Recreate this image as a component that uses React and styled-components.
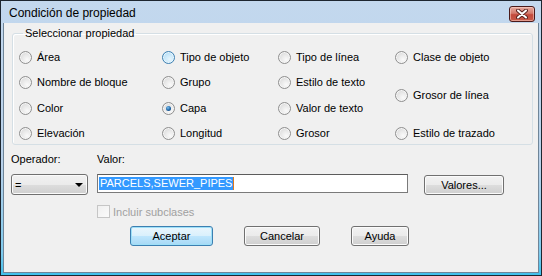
import React from 'react';
import styled, { createGlobalStyle, css } from 'styled-components';

const GlobalStyle = createGlobalStyle`
  html, body {
    margin: 0;
    padding: 0;
    background: #f0f0f0;
  }
  * { box-sizing: border-box; }
`;

const Window = styled.div`
  width: 542px;
  height: 276px;
  border: 1px solid #1d2630;
  padding: 0 2px 2px 2px;
  background: linear-gradient(#c3d8ee 0%, #b8d1ea 60%, #7fcbee 92%, #3fc0ec 100%);
  display: flex;
  flex-direction: column;
  font-family: "Liberation Sans", Arial, sans-serif;
  font-size: 11px;
  color: #000;
`;

const TitleBar = styled.div`
  height: 22px;
  display: flex;
  align-items: center;
  justify-content: space-between;
  padding: 0 4px 0 6px;
`;

const TitleText = styled.span`
  font-size: 12px;
  color: #000;
  margin-top: 1px;
`;

const CloseButton = styled.button`
  width: 26px;
  height: 16px;
  margin-top: 4px;
  padding: 0;
  border: 1px solid #4a1a1a;
  border-radius: 3px;
  background: linear-gradient(#e6aa9f 0%, #d47a6c 45%, #c34a3c 55%, #c95a48 100%);
  box-shadow: inset 0 0 0 1px rgba(255, 220, 210, 0.5);
  display: flex;
  align-items: center;
  justify-content: center;
`;

const Client = styled.div`
  flex: 1;
  background: #f0f0f0;
  border: 1px solid #6f8598;
  border-top: none;
  padding: 4px 5px 0 7px;
  display: flex;
  flex-direction: column;
`;

const GroupBox = styled.fieldset`
  margin: 0 0 0 1px;
  padding: 12px 0 4px 6px;
  border: 1px solid #d5dfe5;
  border-radius: 3px;
  box-shadow: inset 1px 1px 0 #fff;
  min-width: 0;
`;

const Legend = styled.legend`
  padding: 0 2px;
  margin-left: 4px;
  line-height: 12px;
`;

const Columns = styled.div`
  display: flex;
  height: 89px;
`;

const Column = styled.div`
  width: ${p => p.$w ? `${p.$w}px` : 'auto'};
  flex: ${p => p.$w ? 'none' : '1'};
  display: flex;
  flex-direction: column;
  justify-content: space-between;
`;

const Option = styled.label`
  display: flex;
  align-items: center;
  height: 13px;
  line-height: 13px;
  white-space: nowrap;
`;

const RadioDot = styled.span`
  position: relative;
  width: 13px;
  height: 13px;
  border-radius: 50%;
  margin-right: 5px;
  flex: none;
  border: 1px solid #8f8f8f;
  background: radial-gradient(circle at 65% 70%, #fafafa 0%, #e9e9e9 45%, #d2d2d2 100%);
  box-shadow: inset 0 0 0 1px #f6f6f6;
  ${p => p.$hover && css`
    border-color: #3c7fb1;
    background: radial-gradient(circle at 60% 65%, #e6f5fd 0%, #c7e7f9 50%, #9fd3f2 100%);
    box-shadow: inset 0 0 0 1px #e9f6fd;
  `}
  ${p => p.$checked && css`
    &::after {
      content: "";
      position: absolute;
      left: 3px;
      top: 3px;
      width: 5px;
      height: 5px;
      border-radius: 50%;
      background: radial-gradient(circle at 40% 35%, #7cc0f0 0%, #1f65a6 55%, #0b2f5e 100%);
    }
  `}
`;

const Form = styled.div`
  display: grid;
  grid-template-columns: 86px 327px 80px;
  margin-left: 0;
`;

const FieldLabel = styled.div`
  line-height: 13px;
  margin-top: 8px;
  margin-bottom: 8px;
`;

const Combo = styled.div`
  width: 77px;
  height: 21px;
  border: 1px solid #707070;
  border-radius: 3px;
  background: linear-gradient(#f2f2f2 0%, #ebebeb 50%, #dddddd 51%, #cfcfcf 100%);
  box-shadow: inset 0 0 0 1px #fbfbfb;
  display: flex;
  align-items: center;
  justify-content: space-between;
  padding: 0 4px 0 3px;
`;

const Arrow = styled.span`
  width: 0;
  height: 0;
  border-left: 4px solid transparent;
  border-right: 4px solid transparent;
  border-top: 4px solid #000;
  margin-top: 1px;
`;

const TextField = styled.div`
  width: 311px;
  height: 19px;
  border: 1px solid #7a7a7a;
  border-top-color: #5c5c5c;
  background: #fff;
  padding: 0 1px;
  display: flex;
  align-items: center;
`;

const Selected = styled.span`
  background: #3399ff;
  color: #fff;
  line-height: 13px;
  padding: 0 1px;
  border-right: 1px solid #e07a1c;
`;

const Button = styled.button`
  width: ${p => p.$w}px;
  height: 20px;
  padding: 0;
  font-family: inherit;
  font-size: 11px;
  color: #000;
  border: 1px solid #707070;
  border-radius: 3px;
  background: linear-gradient(#f2f2f2 0%, #ebebeb 50%, #dddddd 51%, #cfcfcf 100%);
  box-shadow: inset 0 0 0 1px #fbfbfb;
  ${p => p.$default && css`
    border-color: #3c7fb1;
    background: linear-gradient(#eaf6fd 0%, #d9f0fc 50%, #bee6fd 51%, #a7d9f5 100%);
    box-shadow: inset 0 0 0 1px #9ee0f8;
  `}
`;

const ValuesButton = styled(Button)`
  margin-top: 1px;
`;

const CheckRow = styled.label`
  display: flex;
  align-items: center;
  margin-top: 10px;
  height: 13px;
  color: #a0a0a0;
`;

const CheckBox = styled.span`
  width: 13px;
  height: 13px;
  border: 1px solid #c6c6c6;
  background: linear-gradient(135deg, #f0f0f0, #fbfbfb);
  margin-right: 3px;
`;

const ButtonRow = styled.div`
  display: flex;
  gap: 31px;
  padding-left: 119px;
  margin-top: 8px;
`;

const columns = [
  { w: 143, items: [{ t: 'Área' }, { t: 'Nombre de bloque' }, { t: 'Color' }, { t: 'Elevación' }] },
  { w: 116, items: [{ t: 'Tipo de objeto', hover: true }, { t: 'Grupo' }, { t: 'Capa', checked: true }, { t: 'Longitud' }] },
  { w: 117, items: [{ t: 'Tipo de línea' }, { t: 'Estilo de texto' }, { t: 'Valor de texto' }, { t: 'Grosor' }] },
  { w: 0, items: [{ t: 'Clase de objeto' }, { t: 'Grosor de línea' }, { t: 'Estilo de trazado' }] },
];

function CloseIcon() {
  return (
    <svg width="12" height="10" viewBox="0 0 12 10">
      <path d="M2 1.5 L10 8.5 M10 1.5 L2 8.5" stroke="#5a2320" strokeWidth="4" strokeLinecap="round" />
      <path d="M2 1.5 L10 8.5 M10 1.5 L2 8.5" stroke="#fff" strokeWidth="2" strokeLinecap="round" />
    </svg>
  );
}

export default function App() {
  return (
    <>
      <GlobalStyle />
      <Window>
        <TitleBar>
          <TitleText>Condición de propiedad</TitleText>
          <CloseButton><CloseIcon /></CloseButton>
        </TitleBar>
        <Client>
          <GroupBox>
            <Legend>Seleccionar propiedad</Legend>
            <Columns>
              {columns.map((col, i) => (
                <Column key={i} $w={col.w}>
                  {col.items.map(item => (
                    <Option key={item.t}>
                      <RadioDot $hover={item.hover} $checked={item.checked} />
                      {item.t}
                    </Option>
                  ))}
                </Column>
              ))}
            </Columns>
          </GroupBox>

          <Form>
            <FieldLabel>Operador:</FieldLabel>
            <FieldLabel>Valor:</FieldLabel>
            <div />
            <Combo>
              <span>=</span>
              <Arrow />
            </Combo>
            <TextField>
              <Selected>PARCELS,SEWER_PIPES</Selected>
            </TextField>
            <ValuesButton $w={80}>Valores...</ValuesButton>
            <div />
            <CheckRow>
              <CheckBox />
              Incluir subclases
            </CheckRow>
            <div />
          </Form>

          <ButtonRow>
            <Button $w={83} $default>Aceptar</Button>
            <Button $w={76}>Cancelar</Button>
            <Button $w={58}>Ayuda</Button>
          </ButtonRow>
        </Client>
      </Window>
    </>
  );
}
